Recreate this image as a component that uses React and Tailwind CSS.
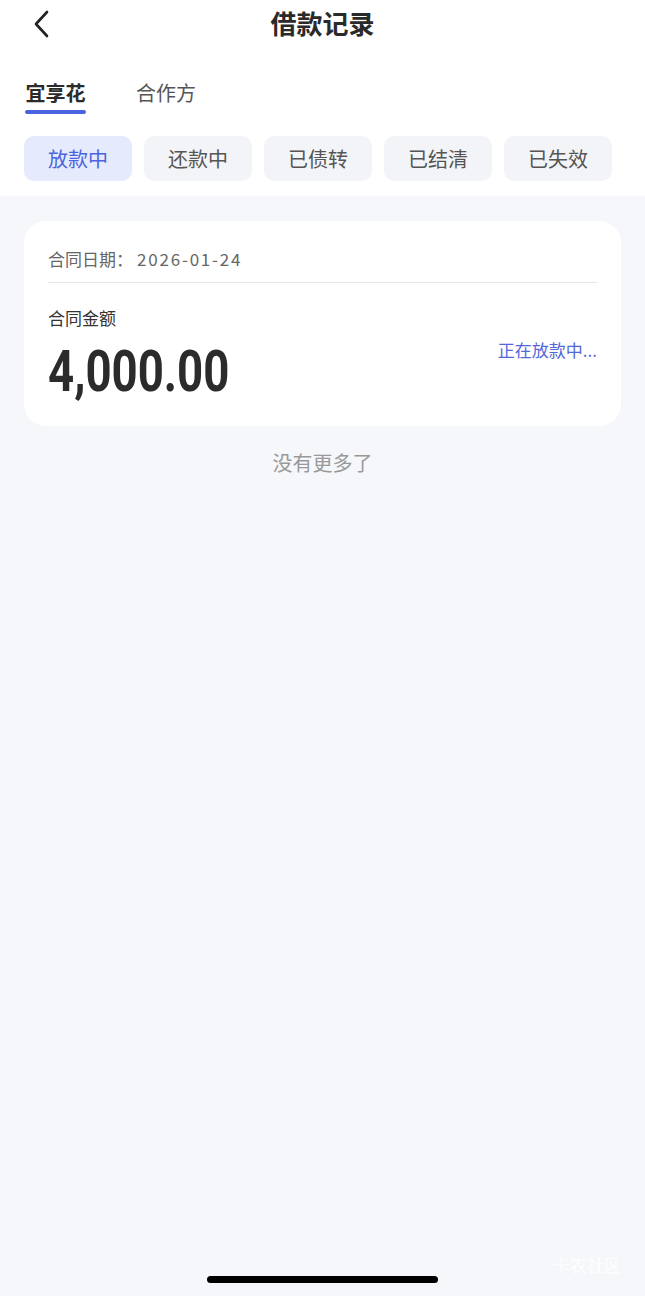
import React from 'react';

const statusTabs = ['放款中', '还款中', '已债转', '已结清', '已失效'];

function BackIcon() {
    return (
        <svg width="20" height="30" viewBox="0 0 20 30" fill="none">
            <path d="M15 3 L4 15 L15 27" stroke="#222" strokeWidth="2.6" strokeLinecap="round" strokeLinejoin="round" />
        </svg>
    );
}

export default function App() {
    return (
        <div
            className="relative min-h-[1296px] w-[645px] bg-[#f6f7fb] text-[#333]"
            style={{ fontFamily: '"Noto Sans CJK SC", "Noto Sans", sans-serif' }}
        >
            {/* header */}
            <div className="bg-white">
                <div className="relative flex h-[46px] items-center justify-center">
                    <div className="absolute left-[32px] top-[9px]">
                        <BackIcon />
                    </div>
                    <h1 className="text-[26px] font-semibold leading-none text-[#2a2a2a]">借款记录</h1>
                </div>

                {/* top tabs */}
                <div className="flex gap-[50px] px-[25px] pt-[32px]">
                    <div className="flex flex-col items-center">
                        <span className="text-[20px] font-bold leading-[30px] text-[#2b2b2b]">宜享花</span>
                        <span className="mt-[2px] h-[4px] w-[61px] rounded-full bg-[#4b63e0]" />
                    </div>
                    <span className="text-[20px] leading-[30px] text-[#555]">合作方</span>
                </div>

                {/* status pills */}
                <div className="flex gap-[12px] px-[24px] pt-[22px] pb-[15px]">
                    {statusTabs.map((t, i) => (
                        <div
                            key={t}
                            className={
                                i === 0
                                    ? 'flex h-[45px] w-[108px] items-center justify-center rounded-[10px] bg-[#e5eafc] text-[20px] text-[#4b63e0]'
                                    : 'flex h-[45px] w-[108px] items-center justify-center rounded-[10px] bg-[#f3f4f7] text-[20px] text-[#555]'
                            }
                        >
                            {t}
                        </div>
                    ))}
                </div>
            </div>

            {/* list */}
            <div className="px-[24px] pt-[25px]">
                <div className="rounded-[22px] bg-white px-[24px] pb-[24px]">
                    <div className="flex h-[62px] items-center border-b border-[#e6e6e6] pt-[14px] text-[17px] text-[#666]">
                        合同日期：<span className="ml-[4px] tracking-[1.8px]">2026-01-24</span>
                    </div>
                    <div className="flex items-start justify-between pt-[24px]">
                        <div>
                            <div className="text-[17px] leading-[22px] text-[#333]">合同金额</div>
                            <div
                                className="mt-[13px] origin-left scale-x-[0.8] text-[57px] font-bold leading-[60px] text-[#2b2b2b]"
                                style={{ fontFamily: 'Roboto, "DejaVu Sans", sans-serif' }}
                            >
                                4,000.00
                            </div>
                        </div>
                        <div className="pt-[32px] text-[17px] leading-[22px] text-[#5468d8]">正在放款中...</div>
                    </div>
                </div>
                <div className="pt-[22px] text-center text-[20px] text-[#999]">没有更多了</div>
            </div>

            {/* watermark */}
            <div className="absolute right-[24px] top-[1252px] text-[17px] text-white/80">卡农社区</div>

            {/* home indicator */}
            <div className="absolute left-[207px] top-[1276px] h-[7px] w-[231px] rounded-full bg-black" />
        </div>
    );
}
